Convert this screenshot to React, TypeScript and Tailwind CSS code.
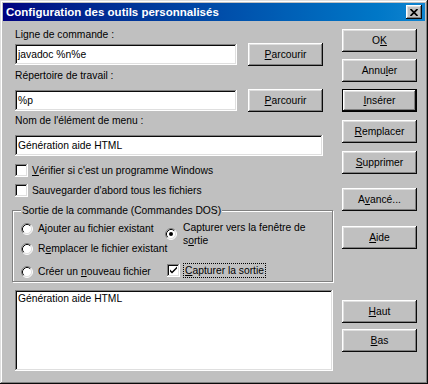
import type { ReactNode } from 'react'

// Win9x-style 3D edges
const RAISED =
  'shadow-[inset_-1px_-1px_#0a0a0a,inset_1px_1px_#ffffff,inset_-2px_-2px_#808080,inset_2px_2px_#dfdfdf]'
const RAISED_DEFAULT =
  'shadow-[inset_-1px_-1px_#000000,inset_1px_1px_#000000,inset_-2px_-2px_#0a0a0a,inset_2px_2px_#ffffff,inset_-3px_-3px_#808080,inset_3px_3px_#dfdfdf]'
const SUNKEN =
  'shadow-[inset_-1px_-1px_#ffffff,inset_1px_1px_#808080,inset_-2px_-2px_#dfdfdf,inset_2px_2px_#0a0a0a]'

// "&Parcourir" -> underline the letter after the ampersand
function accel(text: string): ReactNode {
  const i = text.indexOf('&')
  if (i < 0) return text
  return (
    <>
      {text.slice(0, i)}
      <u className="underline-offset-[1px]">{text[i + 1]}</u>
      {text.slice(i + 2)}
    </>
  )
}

function Button({ label, isDefault = false, className = '' }: { label: string; isDefault?: boolean; className?: string }) {
  return (
    <div
      className={`flex h-[23px] w-[75px] shrink-0 items-center justify-center bg-[#c0c0c0] text-black ${
        isDefault ? RAISED_DEFAULT : RAISED
      } ${className}`}
    >
      <span>{accel(label)}</span>
    </div>
  )
}

function Field({ value, className = '' }: { value: string; className?: string }) {
  return (
    <div className={`flex h-[21px] items-center bg-white pl-[3px] text-black ${SUNKEN} ${className}`}>
      {value}
    </div>
  )
}

function CheckBox({ checked = false }: { checked?: boolean }) {
  return (
    <div className={`relative h-[13px] w-[13px] shrink-0 bg-white ${SUNKEN}`}>
      {checked && (
        <svg width="13" height="13" viewBox="0 0 13 13" className="absolute left-0 top-0">
          <path d="M3 5.5 L5 7.5 L10 2.5 L10 4.5 L5 9.5 L3 7.5 Z" fill="black" />
        </svg>
      )}
    </div>
  )
}

function Radio({ checked = false }: { checked?: boolean }) {
  return (
    <svg width="12" height="12" viewBox="0 0 12 12" className="shrink-0">
      <circle cx="6" cy="6" r="5" fill="white" />
      <path d="M2.11 9.89 A5.5 5.5 0 0 1 9.89 2.11" fill="none" stroke="#808080" />
      <path d="M9.89 2.11 A5.5 5.5 0 0 1 2.11 9.89" fill="none" stroke="#ffffff" />
      <path d="M2.82 9.18 A4.5 4.5 0 0 1 9.18 2.82" fill="none" stroke="#0a0a0a" />
      <path d="M9.18 2.82 A4.5 4.5 0 0 1 2.82 9.18" fill="none" stroke="#dfdfdf" />
      {checked && <circle cx="6" cy="6" r="2" fill="black" />}
    </svg>
  )
}

export default function App() {
  return (
    <div className="flex h-[384px] w-[428px] flex-col bg-[#c0c0c0] p-[3px] font-['Liberation_Sans',Arial,sans-serif] text-[10.3px] leading-[13px] text-black shadow-[inset_-1px_-1px_#0a0a0a,inset_1px_1px_#dfdfdf,inset_-2px_-2px_#808080,inset_2px_2px_#ffffff]">
      {/* title bar */}
      <div className="flex h-[18px] shrink-0 items-center bg-linear-to-r from-[#000080] to-[#1084d0] pl-[3px] pr-[3px]">
        <span className="whitespace-nowrap text-[11.5px] font-bold text-white">
          Configuration des outils personnalisés
        </span>
        <div className={`ml-auto flex h-[14px] w-[16px] items-center justify-center bg-[#c0c0c0] ${RAISED}`}>
          <svg width="8" height="7" viewBox="0 0 8 7">
            <path d="M0.5 0 L7.5 7 M7.5 0 L0.5 7" stroke="black" strokeWidth="1.7" />
          </svg>
        </div>
      </div>

      <div className="flex flex-1">
        {/* left column */}
        <div className="ml-[12px] flex w-[318px] flex-col">
          <div className="mt-[7px]">Ligne de commande :</div>
          <div className="mt-[2px] flex h-[23px] items-center">
            <Field value="javadoc %n%e" className="w-[222px]" />
            <Button label="&Parcourir" className="ml-[11px]" />
          </div>

          <div className="mt-[3px]">Répertoire de travail :</div>
          <div className="mt-[7px] flex h-[23px] items-center">
            <Field value="%p" className="w-[222px]" />
            <Button label="&Parcourir" className="ml-[11px]" />
          </div>

          <div className="mt-[2px]">Nom de l'élément de menu :</div>
          <Field value="Génération aide HTML" className="mt-[8px] w-[308px]" />

          <div className="mt-[8px] flex h-[13px] items-center gap-[4px]">
            <CheckBox />
            <span className="whitespace-nowrap">{accel('&Vérifier si c\'est un programme Windows')}</span>
          </div>
          <div className="mt-[7px] flex h-[13px] items-center gap-[4px]">
            <CheckBox />
            <span className="whitespace-nowrap">Sauvegarder d'abord tous les fichiers</span>
          </div>

          {/* group box */}
          <div className="relative ml-[-3px] mt-[13px] flex h-[72px] w-[321px] border border-[#808080] pl-[8px] pt-[10px] shadow-[inset_1px_1px_#ffffff,1px_1px_#ffffff]">
            <span className="absolute left-[8px] top-[-7px] whitespace-nowrap bg-[#c0c0c0] px-[1px]">
              Sortie de la commande (Commandes DOS)
            </span>
            <div className="flex w-[144px] shrink-0 flex-col">
              <div className="mt-[1px] flex h-[13px] items-center gap-[5px]">
                <Radio />
                <span className="whitespace-nowrap">Ajouter au fichier existant</span>
              </div>
              <div className="mt-[7px] flex h-[13px] items-center gap-[5px]">
                <Radio />
                <span className="whitespace-nowrap">{accel('R&emplacer le fichier existant')}</span>
              </div>
              <div className="mt-[10px] flex h-[13px] items-center gap-[5px]">
                <Radio />
                <span className="whitespace-nowrap">{accel('Créer un &nouveau fichier')}</span>
              </div>
            </div>
            <div className="flex flex-col">
              <div className="flex items-center gap-[6px]">
                <Radio checked />
                <span className="whitespace-nowrap">
                  Capturer vers la fenêtre de
                  <br />
                  {accel('s&ortie')}
                </span>
              </div>
              <div className="ml-[2px] mt-[17px] flex h-[13px] items-center gap-[3px]">
                <CheckBox checked />
                <span className="whitespace-nowrap border border-dotted border-black px-[1px] leading-[13px]">
                  {accel('&Capturer la sortie')}
                </span>
              </div>
            </div>
          </div>

          {/* list */}
          <div className={`mt-[8px] h-[81px] w-[318px] bg-white pl-[3px] pt-[2px] ${SUNKEN}`}>
            Génération aide HTML
          </div>
        </div>

        {/* right column */}
        <div className="ml-[9px] flex flex-col">
          <Button label="O&K" className="mt-[8px]" />
          <Button label="Annu&ler" className="mt-[7px]" />
          <Button label="&Insérer" isDefault className="mt-[7px]" />
          <Button label="&Remplacer" className="mt-[8px]" />
          <Button label="&Supprimer" className="mt-[8px]" />
          <Button label="A&vancé..." className="mt-[14px]" />
          <Button label="&Aide" className="mt-[15px]" />
          <Button label="&Haut" className="mt-[51px]" />
          <Button label="&Bas" className="mt-[6px]" />
        </div>
      </div>
    </div>
  )
}
